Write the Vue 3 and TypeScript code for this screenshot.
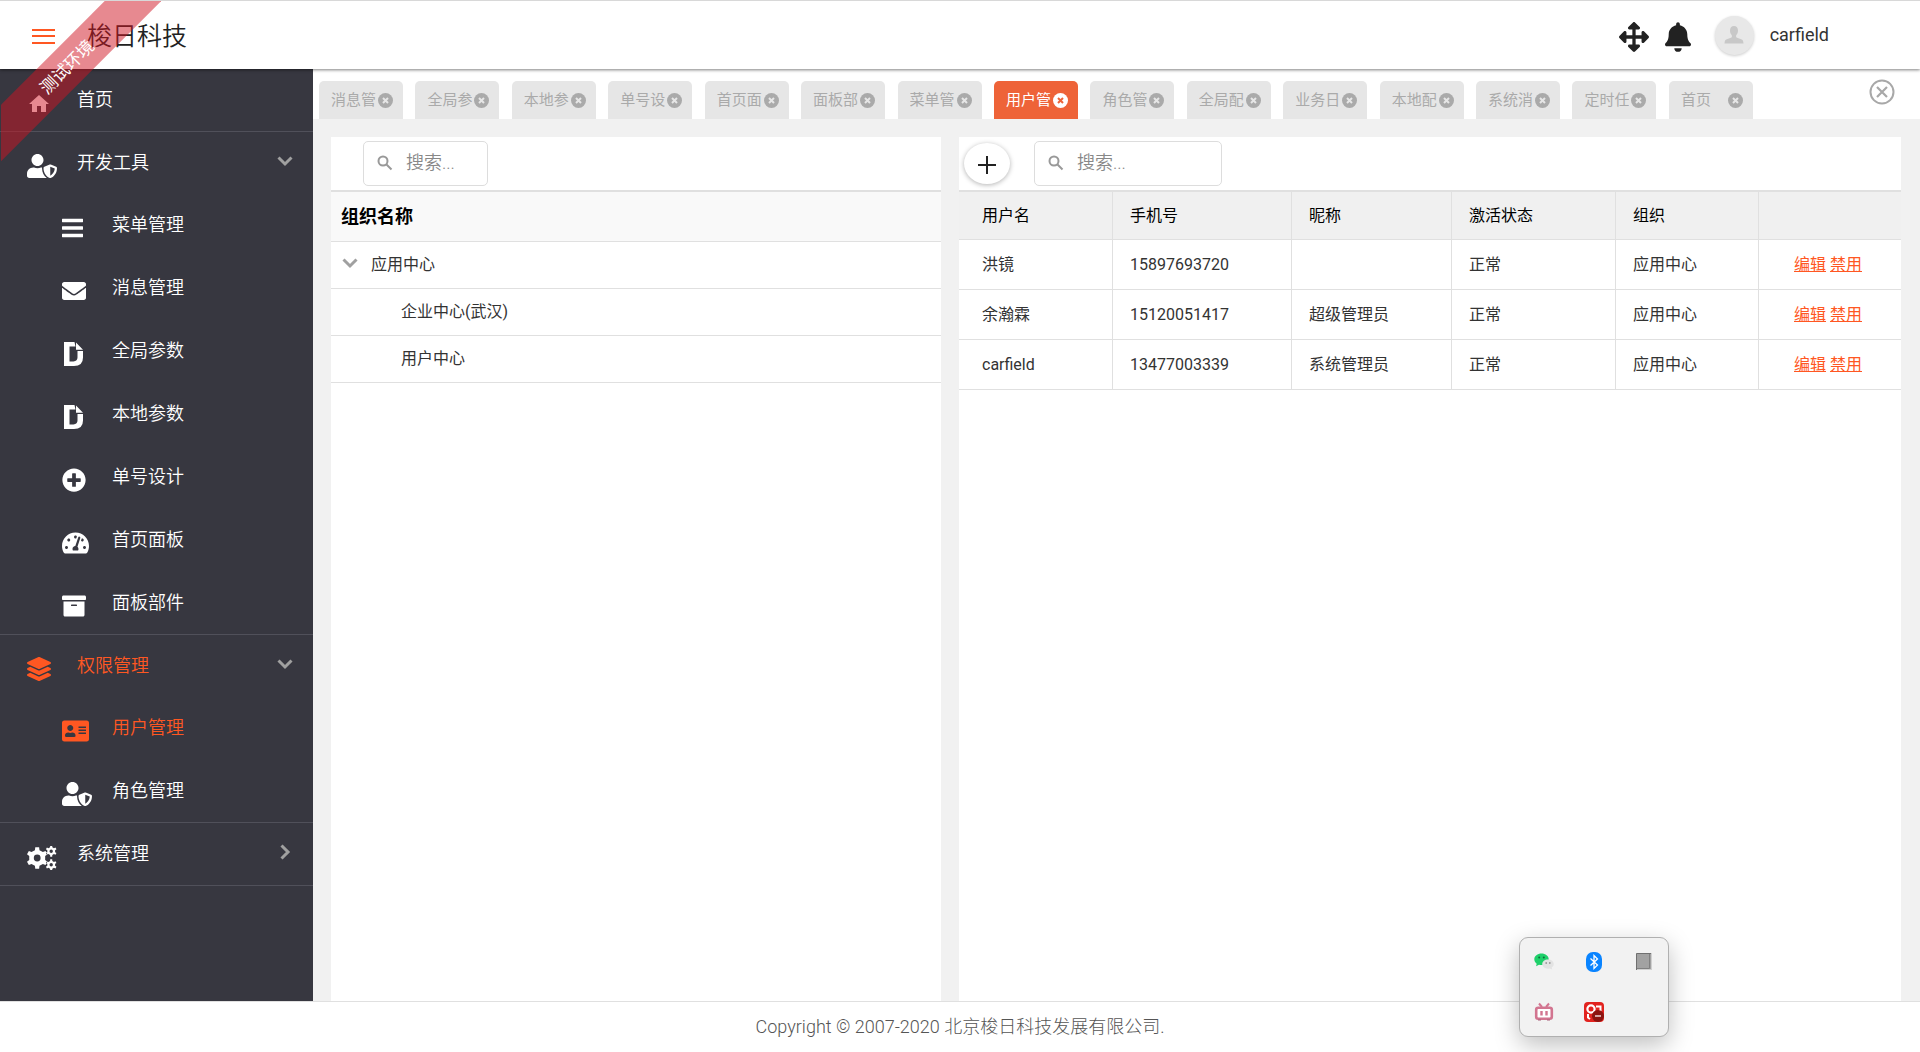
<script setup lang="ts">
import { ref } from 'vue'

interface Icon { w: number; h: number; box: string; d: string }
interface MenuItem { label: string; icon: string; active?: boolean }
interface MenuGroup extends MenuItem { open: boolean; children: MenuItem[] }
interface User { name: string; phone: string; nick: string; state: string; org: string }

/* Outline of a cog wheel with a round hole in its centre. */
function gear(cx: number, cy: number, outer: number, inner: number, hole: number, teeth: number): string {
  const step = (Math.PI * 2) / teeth
  const at = (r: number, a: number) => `${(cx + r * Math.sin(a)).toFixed(2)} ${(cy - r * Math.cos(a)).toFixed(2)}`
  let d = ''
  for (let i = 0; i < teeth; i++) {
    const a = i * step
    d += `${i ? 'L' : 'M'}${at(inner, a - step * 0.27)}L${at(outer, a - step * 0.17)}L${at(outer, a + step * 0.17)}L${at(inner, a + step * 0.27)}`
  }
  return `${d}ZM${cx - hole} ${cy}a${hole} ${hole} 0 1 0 ${hole * 2} 0a${hole} ${hole} 0 1 0 ${-hole * 2} 0Z`
}

const icons: Record<string, Icon> = {
  home: { w: 24, h: 24, box: '0 0 24 24', d: 'M10 20v-6h4v6h5v-8h3L12 3 2 12h3v8z' },
  shield: { w: 30, h: 24, box: '0 0 640 512', d: 'M622.3 271.1l-115.2-45c-4.1-1.6-12.6-3.7-22.2 0l-115.2 45c-10.7 4.2-17.7 14-17.7 24.9 0 111.6 68.7 188.8 132.9 213.9 9.6 3.7 18 1.6 22.2 0C558.4 489.9 640 420.5 640 296c0-10.9-7-20.7-17.7-24.9zM496 462.4V273.3l95.5 37.3c-5.6 87.1-60.9 135.4-95.5 151.8zM224 256c70.7 0 128-57.3 128-128S294.7 0 224 0 96 57.3 96 128s57.3 128 128 128zm96 40c0-2.5.8-4.8 1.1-7.2-2.5-.1-4.9-.8-7.5-.8h-16.7c-22.2 10.2-46.9 16-72.9 16s-50.6-5.8-72.9-16h-16.7C60.2 288 0 348.2 0 422.4V464c0 26.5 21.5 48 48 48h352c6.8 0 13.3-1.5 19.2-4-54-42.9-99.2-116.7-99.2-212z' },
  bars: { w: 21, h: 24, box: '0 0 448 512', d: 'M8 60h432q8 0 8 8v56q0 8-8 8H8q-8 0-8-8V68q0-8 8-8zM8 220h432q8 0 8 8v56q0 8-8 8H8q-8 0-8-8v-56q0-8 8-8zM8 380h432q8 0 8 8v56q0 8-8 8H8q-8 0-8-8v-56q0-8 8-8z' },
  mail: { w: 24, h: 24, box: '0 0 512 512', d: 'M502.3 190.8c3.9-3.1 9.7-.2 9.7 4.7V400c0 26.5-21.5 48-48 48H48c-26.5 0-48-21.5-48-48V195.6c0-5 5.7-7.8 9.7-4.7 22.4 17.4 52.1 39.5 154.1 113.6 21.1 15.4 56.7 47.8 92.2 47.6 35.7.3 72-32.8 92.3-47.6 102-74.1 131.6-96.3 154-113.7zM256 320c23.2.4 56.6-29.2 73.4-41.4 132.7-96.3 142.8-104.7 173.4-128.7 5.8-4.5 9.2-11.5 9.2-18.9v-19c0-26.5-21.5-48-48-48H48c-26.5 0-48 21.5-48 48v19c0 7.4 3.4 14.3 9.2 18.9 30.6 23.9 40.7 32.4 173.4 128.7 16.8 12.2 50.2 41.8 73.4 41.4z' },
  file: { w: 21, h: 24, box: '0 0 21 24', d: 'M2 0h10.5L13.5 4.5H7.5V19.5H11.5Q15.5 19 15.5 15.5V9H21V15.5Q21 24 12 24H2ZM14 .5L21 7.7H14Z' },
  plus: { w: 24, h: 24, box: '0 0 512 512', d: 'M256 8C119 8 8 119 8 256s111 248 248 248 248-111 248-248S393 8 256 8zm144 276c0 6.6-5.4 12-12 12h-92v92c0 6.6-5.4 12-12 12h-56c-6.6 0-12-5.4-12-12v-92h-92c-6.6 0-12-5.4-12-12v-56c0-6.6 5.4-12 12-12h92v-92c0-6.6 5.4-12 12-12h56c6.6 0 12 5.4 12 12v92h92c6.6 0 12 5.4 12 12v56z' },
  gauge: { w: 27, h: 24, box: '0 0 576 512', d: 'M288 32C128.94 32 0 160.94 0 320c0 52.8 14.25 102.26 39.06 144.8 5.61 9.62 16.3 15.2 27.44 15.2h443c11.14 0 21.83-5.58 27.44-15.2C561.75 422.26 576 372.8 576 320c0-159.06-128.94-288-288-288zm0 64c14.71 0 26.58 10.13 30.32 23.65-1.11 2.26-2.64 4.23-3.45 6.67l-9.22 27.67c-5.13 3.49-10.97 6.01-17.64 6.01-17.67 0-32-14.33-32-32S270.33 96 288 96zM96 384c-17.67 0-32-14.33-32-32s14.33-32 32-32 32 14.33 32 32-14.33 32-32 32zm48-160c-17.67 0-32-14.33-32-32s14.33-32 32-32 32 14.33 32 32-14.33 32-32 32zm246.77-72.41l-61.33 184C343.13 347.33 352 364.54 352 384c0 11.72-3.38 22.55-8.88 32H232.88c-5.5-9.45-8.88-20.28-8.88-32 0-33.94 26.5-61.43 59.9-63.59l61.34-184.01c4.17-12.56 17.73-19.45 30.36-15.17 12.57 4.19 19.35 17.79 15.17 30.36zm14.66 57.2l15.52-46.55c3.47-1.29 7.13-2.23 11.05-2.23 17.67 0 32 14.33 32 32s-14.33 32-32 32c-11.38-.01-20.89-6.28-26.57-15.22zM480 384c-17.67 0-32-14.33-32-32s14.33-32 32-32 32 14.33 32 32-14.33 32-32 32z' },
  archive: { w: 24, h: 24, box: '0 0 512 512', d: 'M32 448c0 17.7 14.3 32 32 32h384c17.7 0 32-14.3 32-32V160H32v288zm160-212c0-6.6 5.4-12 12-12h104c6.6 0 12 5.4 12 12v8c0 6.6-5.4 12-12 12H204c-6.6 0-12-5.4-12-12v-8zM480 32H32C14.3 32 0 46.3 0 64v48c0 8.800 7.200 16 16 16h480c8.800 0 16-7.200 16-16V64c0-17.700-14.300-32-32-32z' },
  layers: { w: 24, h: 24, box: '0 0 512 512', d: 'M12.41 148.02l232.94 105.67c6.8 3.09 14.49 3.09 21.29 0l232.94-105.67c16.55-7.51 16.55-32.52 0-40.03L266.65 2.31a25.607 25.607 0 0 0-21.29 0L12.41 107.98c-16.55 7.51-16.55 32.53 0 40.04zm487.18 88.28l-58.09-26.33-161.64 73.27c-7.56 3.43-15.59 5.17-23.86 5.17s-16.29-1.74-23.86-5.17L70.51 209.97l-58.1 26.33c-16.55 7.5-16.55 32.5 0 40l232.94 105.59c6.8 3.08 14.49 3.08 21.29 0L499.59 276.3c16.55-7.5 16.55-32.5 0-40zm0 127.8l-57.87-26.23-161.86 73.37c-7.56 3.43-15.59 5.17-23.86 5.17s-16.29-1.74-23.86-5.17L70.29 337.87 12.41 364.1c-16.55 7.5-16.55 32.5 0 40l232.94 105.59c6.8 3.08 14.49 3.08 21.29 0L499.59 404.1c16.55-7.5 16.55-32.5 0-40z' },
  card: { w: 27, h: 24, box: '0 0 576 512', d: 'M528 32H48C21.5 32 0 53.5 0 80v352c0 26.5 21.5 48 48 48h480c26.5 0 48-21.5 48-48V80c0-26.5-21.5-48-48-48zm-352 96c35.3 0 64 28.7 64 64s-28.7 64-64 64-64-28.7-64-64 28.7-64 64-64zm112 236.8c0 10.6-10 19.2-22.4 19.2H86.4C74 384 64 375.4 64 364.8v-19.2c0-31.8 30.1-57.6 67.2-57.6h5c12.3 5.1 25.7 8 39.8 8s27.6-2.9 39.8-8h5c37.1 0 67.2 25.8 67.2 57.6v19.2zM512 312c0 4.4-3.6 8-8 8H360c-4.4 0-8-3.6-8-8v-16c0-4.4 3.6-8 8-8h144c4.4 0 8 3.6 8 8v16zm0-64c0 4.4-3.6 8-8 8H360c-4.4 0-8-3.6-8-8v-16c0-4.4 3.6-8 8-8h144c4.4 0 8 3.6 8 8v16zm0-64c0 4.4-3.6 8-8 8H360c-4.4 0-8-3.6-8-8v-16c0-4.4 3.6-8 8-8h144c4.4 0 8 3.6 8 8v16z' },
  cogs: { w: 30, h: 24, box: '0 0 30 24', d: gear(10.2, 12, 10.9, 8.2, 3.4, 6) + gear(24.2, 5.2, 5.6, 4, 1.7, 6) + gear(24.2, 18.8, 5.6, 4, 1.7, 6) },
}

const groups = ref<MenuGroup[]>([
  {
    label: '开发工具', icon: 'shield', open: true,
    children: [
      { label: '菜单管理', icon: 'bars' },
      { label: '消息管理', icon: 'mail' },
      { label: '全局参数', icon: 'file' },
      { label: '本地参数', icon: 'file' },
      { label: '单号设计', icon: 'plus' },
      { label: '首页面板', icon: 'gauge' },
      { label: '面板部件', icon: 'archive' },
    ],
  },
  {
    label: '权限管理', icon: 'layers', open: true, active: true,
    children: [
      { label: '用户管理', icon: 'card', active: true },
      { label: '角色管理', icon: 'shield' },
    ],
  },
  { label: '系统管理', icon: 'cogs', open: false, children: [] },
])

const tabs = ['消息管', '全局参', '本地参', '单号设', '首页面', '面板部', '菜单管', '用户管', '角色管', '全局配', '业务日', '本地配', '系统消', '定时任', '首页']
const activeTab = ref('用户管')

const users: User[] = [
  { name: '洪镜', phone: '15897693720', nick: '', state: '正常', org: '应用中心' },
  { name: '余瀚霖', phone: '15120051417', nick: '超级管理员', state: '正常', org: '应用中心' },
  { name: 'carfield', phone: '13477003339', nick: '系统管理员', state: '正常', org: '应用中心' },
]
</script>

<template>
  <div class="page">
    <header class="topbar">
      <button class="menu-btn" type="button" aria-label="菜单">
        <svg width="23" height="15" viewBox="0 0 23 15"><path d="M0 0h23v2H0zM0 6h23v2H0zM0 13h23v2H0z" fill="#ff5722" /></svg>
      </button>
      <h1 class="brand">梭日科技</h1>
      <div class="tools">
        <button type="button" aria-label="全屏">
          <svg width="30" height="30" viewBox="0 0 512 512"><path fill="#222" d="M352.201 425.775l-79.196 79.196c-9.373 9.373-24.568 9.373-33.941 0l-79.196-79.196c-15.119-15.119-4.411-40.971 16.971-40.97h51.162L228 284H127.196v51.162c0 21.382-25.851 32.09-40.971 16.971L7.029 272.937c-9.373-9.373-9.373-24.569 0-33.941L86.225 159.8c15.119-15.119 40.971-4.411 40.971 16.971V228H228V127.196h-51.23c-21.382 0-32.09-25.851-16.971-40.971l79.196-79.196c9.373-9.373 24.568-9.373 33.941 0l79.196 79.196c15.119 15.119 4.411 40.971-16.971 40.971h-51.162V228h100.804v-51.162c0-21.382 25.851-32.09 40.97-16.971l79.196 79.196c9.373 9.373 9.373 24.569 0 33.941L425.773 352.2c-15.119 15.119-40.971 4.411-40.97-16.971V284H284v100.804h51.23c21.382 0 32.09 25.851 16.971 40.971z" /></svg>
        </button>
        <button type="button" aria-label="通知">
          <svg width="26" height="30" viewBox="0 0 448 512"><path fill="#222" d="M224 512c35.32 0 63.97-28.65 63.97-64H160.03c0 35.35 28.65 64 63.97 64zm215.39-149.71c-19.32-20.76-55.47-51.99-55.47-154.29 0-77.7-54.48-139.9-127.94-155.16V32c0-17.67-14.32-32-31.98-32s-31.98 14.33-31.98 32v20.84C118.56 68.1 64.08 130.3 64.08 208c0 102.3-36.15 133.53-55.47 154.29-6 6.45-8.66 14.16-8.61 21.71.11 16.4 12.98 32 32.1 32h383.8c19.12 0 32-15.6 32.1-32 .05-7.55-2.61-15.27-8.61-21.71z" /></svg>
        </button>
        <span class="avatar">
          <svg width="20" height="20" viewBox="0 0 20 20"><path fill="#c8c8c8" d="M10 1c2.600 0 4 1.800 4 4.500 0 2-.7 3.700-1.800 4.700-.3 1.300 0 2.200 1 2.600l4.600 1.700c1.100.5 1.500 1.700 1.700 4H.5c.2-2.300.6-3.500 1.700-4l4.600-1.700c1-.4 1.300-1.300 1-2.600C6.700 9.200 6 7.500 6 5.500 6 2.800 7.400 1 10 1z" /></svg>
        </span>
        <span class="user">carfield</span>
      </div>
    </header>

    <div class="body">
      <nav class="sidebar">
        <section class="group">
          <a class="row single" href="#">
            <span class="glyph"><svg :width="24" :height="24" viewBox="0 0 24 24"><path :d="icons.home.d" /></svg></span>
            <span>首页</span>
          </a>
        </section>
        <section v-for="g in groups" :key="g.label" class="group">
          <button class="row" :class="{ on: g.active, single: !g.open }" type="button" @click="g.open = !g.open">
            <span class="glyph"><svg :width="icons[g.icon].w" :height="icons[g.icon].h" :viewBox="icons[g.icon].box"><path :d="icons[g.icon].d" /></svg></span>
            <span class="label">{{ g.label }}</span>
            <svg class="chevron" width="16" height="16" viewBox="0 0 16 16">
              <path :d="g.open ? 'M1.500 4.500 8 11l6.500-6.500' : 'M4.500 1.500 11 8l-6.500 6.500'" />
            </svg>
          </button>
          <template v-if="g.open">
            <a v-for="c in g.children" :key="c.label" class="row child" :class="{ on: c.active }" href="#">
              <span class="glyph"><svg :width="icons[c.icon].w" :height="icons[c.icon].h" :viewBox="icons[c.icon].box"><path :d="icons[c.icon].d" /></svg></span>
              <span>{{ c.label }}</span>
            </a>
          </template>
        </section>
      </nav>

      <main class="main">
        <div class="tabbar">
          <div class="tabs">
            <button v-for="t in tabs" :key="t" class="tab" :class="{ current: t === activeTab }" type="button" @click="activeTab = t">
              <span class="tab-text">{{ t }}</span>
              <svg width="15" height="15" viewBox="0 0 15 15">
                <circle cx="7.5" cy="7.5" r="7.5" />
                <path d="M5 5l5 5M10 5l-5 5" />
              </svg>
            </button>
          </div>
          <div class="tab-end">
            <button type="button" aria-label="关闭全部">
              <svg width="26" height="26" viewBox="0 0 26 26" fill="none" stroke="#a8a8a8" stroke-width="2"><circle cx="13" cy="13" r="11.500" /><path d="M8 8l10 10M18 8L8 18" stroke-width="2.200" /></svg>
            </button>
          </div>
        </div>

        <div class="panels">
          <section class="panel">
            <div class="bar org-bar">
              <label class="search narrow">
                <svg width="16" height="16" viewBox="0 0 16 16"><circle cx="6" cy="6" r="4.500" /><path d="M9.500 9.500l5 5" /></svg>
                <input type="text" placeholder="搜索..." aria-label="搜索组织" />
              </label>
            </div>
            <table class="tree">
              <thead><tr><th>组织名称</th></tr></thead>
              <tbody>
                <tr>
                  <td class="root">
                    <svg class="chevron" width="16" height="16" viewBox="0 0 16 16"><path d="M1.500 4.500 8 11l6.500-6.500" /></svg>
                    <span>应用中心</span>
                  </td>
                </tr>
                <tr><td class="leaf">企业中心(武汉)</td></tr>
                <tr><td class="leaf">用户中心</td></tr>
              </tbody>
            </table>
          </section>

          <section class="panel">
            <div class="bar user-bar">
              <button class="add" type="button" aria-label="新增">
                <svg width="18" height="18" viewBox="0 0 18 18"><path d="M8 0h2v8h8v2h-8v8H8v-8H0V8h8z" fill="#222" /></svg>
              </button>
              <label class="search wide">
                <svg width="16" height="16" viewBox="0 0 16 16"><circle cx="6" cy="6" r="4.500" /><path d="M9.500 9.500l5 5" /></svg>
                <input type="text" placeholder="搜索..." aria-label="搜索用户" />
              </label>
            </div>
            <table class="users">
              <thead>
                <tr>
                  <th class="c-name">用户名</th>
                  <th class="c-phone">手机号</th>
                  <th class="c-nick">昵称</th>
                  <th class="c-state">激活状态</th>
                  <th class="c-org">组织</th>
                  <th class="c-act"></th>
                </tr>
              </thead>
              <tbody>
                <tr v-for="u in users" :key="u.phone">
                  <td>{{ u.name }}</td>
                  <td>{{ u.phone }}</td>
                  <td>{{ u.nick }}</td>
                  <td>{{ u.state }}</td>
                  <td>{{ u.org }}</td>
                  <td class="actions"><a href="#">编辑</a>&#32;<a href="#">禁用</a></td>
                </tr>
              </tbody>
            </table>
          </section>
        </div>
      </main>
    </div>

    <footer class="footer">Copyright © 2007-2020 北京梭日科技发展有限公司.</footer>

    <div class="ribbon"><span>测试环境</span></div>

    <div class="tray">
      <svg width="20" height="20" viewBox="0 0 20 20">
        <path d="M7.500 1.500C3.500 1.500.3 4 .3 7.300c0 1.800.9 3.300 2.400 4.400l-.6 2.600 2.900-1.500c.8.2 1.600.3 2.500.3 4 0 7.200-2.500 7.200-5.800s-3.200-5.800-7.200-5.800z" fill="#1fd06a" />
        <circle cx="5.200" cy="5.600" r="1" fill="#12693a" /><circle cx="9.800" cy="5.600" r="1" fill="#12693a" />
        <path d="M14 7.500c-3.200 0-5.800 2-5.800 4.600s2.600 4.600 5.800 4.600c.7 0 1.300-.1 1.900-.3l2.300 1.200-.5-2c1.300-.8 2.100-2.100 2.100-3.500 0-2.600-2.600-4.600-5.800-4.600z" fill="#e3e3e3" />
        <circle cx="12.200" cy="11" r=".9" fill="#999" /><circle cx="15.800" cy="11" r=".9" fill="#999" />
      </svg>
      <svg width="20" height="20" viewBox="0 0 20 20">
        <rect x="2" y="0" width="16" height="20" rx="7" fill="#0a84ff" />
        <path d="M6.500 6.500l7 6.500-3.500 3.500v-13L13.500 7l-7 6.500" fill="none" stroke="#fff" stroke-width="1.300" />
      </svg>
      <svg width="20" height="20" viewBox="0 0 20 20">
        <rect x="2.500" y="1.500" width="15" height="16" fill="#a2a2a2" stroke="#d0d0d0" />
        <path d="M2.500 18V1.500H17" fill="none" stroke="#707070" /><path d="M15.500 2v14.500H3" fill="none" stroke="#808080" />
      </svg>
      <svg width="20" height="20" viewBox="0 0 20 20">
        <path d="M5 1.500l3 3.500M15 1.500L12 5" stroke="#d27590" stroke-width="2" />
        <rect x="2.200" y="5.700" width="15.600" height="11" rx="2" fill="#fff" stroke="#d27590" stroke-width="2.600" />
        <path d="M7.500 9v4.500M12.500 9v4.500" stroke="#d27590" stroke-width="2.400" /><path d="M4 18h3M13 18h3" stroke="#a9607a" />
      </svg>
      <svg width="20" height="20" viewBox="0 0 20 20">
        <rect width="20" height="20" rx="4" fill="#e2231f" />
        <circle cx="7" cy="7" r="3.600" fill="none" stroke="#fff" stroke-width="2.200" />
        <path d="M12 4.500h4.500v4L15 10M4 12v3.500L6 17" fill="none" stroke="#fff" stroke-width="2" />
        <circle cx="14" cy="14" r="6" fill="#8c1410" /><path d="M11 14h6" stroke="#e8c8c8" stroke-width="1.600" />
      </svg>
    </div>
  </div>
</template>

<style>
body { margin: 0; background: #fff; }
</style>

<style scoped>
.page {
  position: relative;
  display: flex;
  flex-direction: column;
  min-height: 100vh;
  font-family: Roboto, "Noto Sans CJK SC", sans-serif;
  font-size: 16px;
  line-height: 24px;
  color: #333;
}
.page *, .page { box-sizing: border-box; }
button { padding: 0; border: 0; background: none; font: inherit; color: inherit; cursor: pointer; }
svg { display: block; flex: none; }

.topbar {
  position: relative;
  display: flex;
  align-items: center;
  height: 69px;
  padding: 2px 91px 0 32px;
  border-top: 1px solid #d8d8d8;
  background: #fff;
  box-shadow: 0 1px 3px rgba(0, 0, 0, 0.5);
}
.brand { margin: 0 0 0 32px; padding-top: 2px; font-size: 25px; font-weight: 350; line-height: 32px; color: #222; }
.tools { display: flex; align-items: center; gap: 16px; margin-left: auto; padding-top: 2px; }
.avatar {
  display: flex;
  align-items: center;
  justify-content: center;
  width: 39px;
  height: 39px;
  margin: 0 0 4px 8px;
  border-radius: 50%;
  background: #e8e8e8;
  box-shadow: 0 1px 3px rgba(0, 0, 0, 0.2);
}
.user { margin-bottom: 4px; font-size: 18px; color: #333; }

.body { display: flex; flex: 1; }
.sidebar { flex: none; width: 313px; background: #373740; color: #fff; font-size: 18px; font-weight: 350; }
.group { border-bottom: 1px solid #50505a; }
.row {
  display: flex;
  align-items: center;
  width: 100%;
  height: 61px;
  padding: 0 20px 0 27px;
  color: #fff;
  text-align: left;
  text-decoration: none;
}
.row.single { height: 62px; }
.row.child { height: 63px; padding-left: 62px; }
.row.on { color: #ff5722; }
.row .chevron { margin-bottom: 4px; }
.glyph { width: 50px; padding-top: 7px; }
.glyph path { fill: currentColor; fill-rule: evenodd; }
.label { flex: 1; }
.chevron { fill: none; stroke: #a0a0a0; stroke-width: 3; }

.main { display: flex; flex: 1; flex-direction: column; min-width: 0; background: #f1f1f1; }
.tabbar { display: flex; height: 50px; padding-left: 6px; background: #fff; }
.tabs { display: flex; flex: 1; align-items: flex-end; justify-content: space-between; }
.tab {
  display: flex;
  align-items: center;
  gap: 2px;
  width: 84px;
  height: 38px;
  padding-left: 12px;
  border-radius: 5px 5px 0 0;
  background: #e6e6e6;
  color: #aaa;
  font-size: 15px;
  text-align: left;
}
.tab-text { width: 45px; overflow: hidden; white-space: nowrap; }
.tab circle { fill: #aaa; }
.tab path { stroke: #e6e6e6; stroke-width: 2; }
.tab.current { background: #ee6338; color: #fff; }
.tab.current circle { fill: #fff; }
.tab.current path { stroke: #ee6338; }
.tab-end { display: flex; align-items: center; justify-content: flex-end; width: 167px; padding: 0 25px 4px 0; }

.panels { display: grid; flex: 1; grid-template-columns: 610fr 942fr; gap: 18px; padding: 18px 19px 0 18px; }
.panel { min-width: 0; background: #fff; }
.bar { display: flex; align-items: center; height: 55px; border-bottom: 2px solid #e0e0e0; }
.org-bar { padding-left: 32px; }
.user-bar { gap: 24px; padding-left: 5px; }
.search {
  display: flex;
  align-items: center;
  height: 45px;
  padding: 0 12px 2px 13px;
  border: 1px solid #ddd;
  border-radius: 5px;
}
.search svg { fill: none; stroke: #999; stroke-width: 2; }
.search input {
  flex: 1;
  min-width: 0;
  margin-left: 13px;
  padding: 0;
  border: 0;
  outline: 0;
  background: none;
  font: inherit;
  font-size: 18px;
  font-weight: 350;
  color: #333;
}
.search input::placeholder { color: #888; opacity: 1; }
.narrow { width: 125px; }
.wide { width: 188px; }
.add {
  display: flex;
  align-items: center;
  justify-content: center;
  width: 46px;
  height: 41px;
  padding-top: 2px;
  border-radius: 50%;
  background: #fff;
  box-shadow: 0 1px 5px rgba(0, 0, 0, 0.3);
}

table { width: 100%; border-collapse: separate; border-spacing: 0; }
th, td { padding: 0; border-bottom: 1px solid #e0e0e0; text-align: left; }
.tree th { height: 50px; padding-left: 10px; background: #f9f9f9; color: #000; font-size: 18px; font-weight: 700; }
.tree td { height: 47px; }
.tree .root { display: flex; align-items: center; gap: 13px; padding-left: 11px; }
.tree .chevron { margin-bottom: 4px; }
.tree .leaf { padding-left: 70px; }
.users { table-layout: fixed; }
.users th, .users td { height: 50px; padding-left: 17px; border-right: 1px solid #e0e0e0; }
.users th { height: 48px; background: #f0f0f0; color: #000; font-weight: 400; }
.users th:first-child, .users td:first-child { padding-left: 23px; }
.users th:last-child, .users td:last-child { padding-left: 0; border-right: 0; }
.c-name { width: 154px; }
.c-phone { width: 179px; }
.c-nick { width: 160px; }
.c-state { width: 164px; }
.c-org { width: 143px; }
.c-act { width: 142px; }
.users .actions { padding-right: 4px; text-align: center; }
.actions a { color: #ff5722; text-decoration: underline; }

.footer {
  height: 51px;
  border-top: 1px solid #e0e0e0;
  background: #fff;
  color: #555;
  font-size: 18px;
  font-weight: 300;
  line-height: 50px;
  text-align: center;
}

.ribbon { position: absolute; top: 1px; left: 1px; width: 160px; height: 160px; overflow: hidden; pointer-events: none; }
.ribbon span {
  position: absolute;
  top: 46px;
  left: -54px;
  width: 240px;
  height: 40px;
  background: rgba(207, 20, 33, 0.5);
  color: #fff;
  font-size: 17px;
  line-height: 40px;
  text-align: center;
  transform: rotate(-45deg);
}

.tray {
  position: absolute;
  right: 251px;
  bottom: 15px;
  display: grid;
  grid-template-columns: repeat(3, 20px);
  gap: 30px;
  padding: 14px;
  border: 1px solid #b0b0b0;
  border-radius: 9px;
  background: #f2f2f2;
  box-shadow: 0 8px 24px rgba(0, 0, 0, 0.25);
}
</style>
